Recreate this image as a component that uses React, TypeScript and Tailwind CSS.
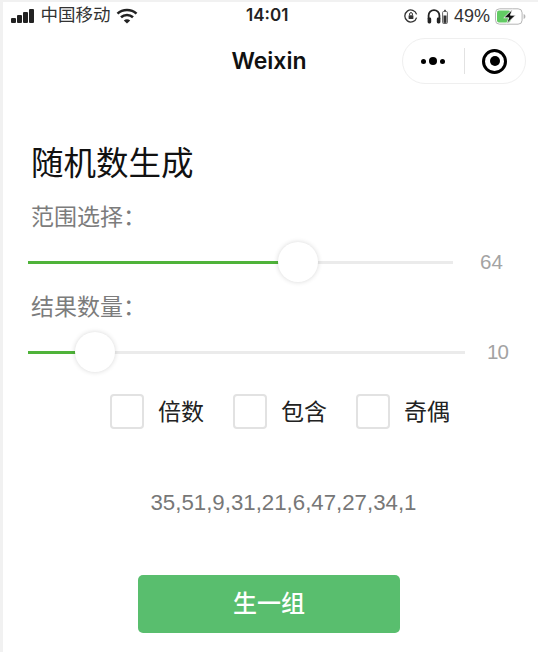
import { Fragment } from "react";

const SANS = "font-['Liberation_Sans','Noto_Sans_CJK_SC',sans-serif]";
const UI = "font-['Inter','Noto_Sans_CJK_SC',sans-serif]";

function SignalBars() {
  return (
    <div className="flex items-end gap-[1.5px]">
      <span className="h-[5px] w-[4.5px] rounded-[1px] bg-[#222]" />
      <span className="h-[8px] w-[4.5px] rounded-[1px] bg-[#222]" />
      <span className="h-[11px] w-[4.5px] rounded-[1px] bg-[#222]" />
      <span className="h-[14px] w-[4.5px] rounded-[1px] bg-[#222]" />
    </div>
  );
}

function WifiIcon() {
  return (
    <svg width="22" height="16" viewBox="0 0 22 16" fill="none" stroke="#222" strokeWidth="2.6">
      <path d="M1.5 5.6C6.8 0.8 15.2 0.8 20.5 5.6" />
      <path d="M5 9.2C8.4 6.2 13.6 6.2 17 9.2" />
      <path d="M11 15.5L7.8 12.4C9.6 10.9 12.4 10.9 14.2 12.4Z" fill="#222" stroke="none" />
    </svg>
  );
}

function OrientationLock() {
  return (
    <svg width="14" height="14" viewBox="0 0 14 14" fill="none">
      <path d="M12.6 8.6A6 6 0 1 1 12.6 5.4" stroke="#333" strokeWidth="1.3" />
      <rect x="4.6" y="6.2" width="4.8" height="3.8" rx="0.6" fill="#333" />
      <path d="M5.6 6.2V5A1.4 1.4 0 0 1 8.4 5V6.2" stroke="#333" strokeWidth="1" />
    </svg>
  );
}

function Headphones() {
  return (
    <svg width="22" height="16" viewBox="0 0 22 16" fill="none">
      <path d="M1.6 11V7.5A5.4 5.4 0 0 1 12.4 7.5V11" stroke="#222" strokeWidth="1.8" />
      <rect x="0.6" y="9.5" width="3.6" height="6" rx="1.4" fill="#222" />
      <rect x="9.8" y="9.5" width="3.6" height="6" rx="1.4" fill="#222" />
      <rect x="15.6" y="3.5" width="4.8" height="12" rx="1" fill="none" stroke="#555" strokeWidth="0.9" />
      <rect x="16.5" y="7.5" width="3" height="7.4" fill="#333" />
      <rect x="17" y="1.8" width="2" height="1.4" fill="#555" />
    </svg>
  );
}

function Battery() {
  return (
    <svg width="31" height="17" viewBox="0 0 31 17" fill="none">
      <rect x="0.5" y="0.8" width="26.6" height="15.4" rx="4" stroke="#b5b5b5" strokeWidth="1" />
      <rect x="2" y="2.4" width="13.5" height="12.2" rx="2" fill="#62cb63" />
      <path d="M28.6 6V11C30 10.6 30.4 9.5 30.4 8.5C30.4 7.5 30 6.4 28.6 6Z" fill="#b5b5b5" />
      <path d="M17.5 1.2L8.8 9.8H13.8L11.6 15.8L20.6 7.2H15.4Z" fill="#111" stroke="#fff" strokeWidth="0.8" />
    </svg>
  );
}

function Capsule() {
  return (
    <div className="flex h-[46px] w-[124px] items-center rounded-full border border-[#efefef] bg-white">
      <div className="flex flex-1 items-center justify-center gap-[3px]">
        <span className="h-[5px] w-[5px] rounded-full bg-black" />
        <span className="h-[8px] w-[8px] rounded-full bg-black" />
        <span className="h-[5px] w-[5px] rounded-full bg-black" />
      </div>
      <span className="h-[26px] w-px bg-[#e2e2e2]" />
      <div className="flex flex-1 items-center justify-center">
        <span className="flex h-[25px] w-[25px] items-center justify-center rounded-full border-[3px] border-black">
          <span className="h-[10px] w-[10px] rounded-full bg-black" />
        </span>
      </div>
    </div>
  );
}

function Slider({
  trackWidth,
  filled,
  value,
  valueClass,
}: {
  trackWidth: number;
  filled: number;
  value: number;
  valueClass: string;
}) {
  return (
    <div className="mt-[5px] flex h-[50px] items-center pl-[25px]">
      <div className="relative h-[3px] bg-[#ebebeb]" style={{ width: trackWidth }}>
        <div className="h-full bg-[#4fb33a]" style={{ width: filled }} />
        <div
          className="absolute top-[-19px] h-[40px] w-[40px] rounded-full bg-white shadow-[0_0_5px_rgba(0,0,0,0.16)]"
          style={{ left: filled - 1 }}
        />
      </div>
      <span className={`text-[20.5px] leading-none text-[#a3a3a3] ${valueClass}`}>{value}</span>
    </div>
  );
}

export default function App() {
  return (
    <div className={`h-[652px] w-[538px] overflow-hidden bg-[#f1f1f1] pl-[3px] pt-[2px] ${SANS}`}>
      <div className="h-[650px] w-[535px] bg-white">
        <div className="relative flex h-[28px] items-center justify-between pl-[8px] pr-[12px]">
          <div className="flex items-center">
            <SignalBars />
            <span className="ml-[7px] text-[17.5px] leading-none text-[#333]">中国移动</span>
            <span className="ml-[5px] flex">
              <WifiIcon />
            </span>
          </div>
          <span className={`absolute left-[243px] top-[5px] text-[17px] font-semibold leading-none text-[#222] ${UI}`}>
            14:01
          </span>
          <div className="flex items-center gap-[5px]">
            <span className="mr-[4px] flex">
              <OrientationLock />
            </span>
            <Headphones />
            <span className="text-[18px] leading-none text-[#333]">49%</span>
            <Battery />
          </div>
        </div>

        <div className="relative flex h-[62px] items-center justify-center">
          <span className={`ml-[-3px] text-[23px] font-semibold leading-none text-[#111] ${UI}`}>Weixin</span>
          <div className="absolute right-[12px] top-[8px]">
            <Capsule />
          </div>
        </div>

        <h1 className="ml-[28px] mt-[52px] text-[32.5px] font-normal leading-[40px] text-[#111]">随机数生成</h1>

        <div className="ml-[28px] mt-[18px] text-[23px] leading-[30px] text-[#7c7c7c]">范围选择：</div>
        <Slider trackWidth={425} filled={251} value={64} valueClass="ml-[27px]" />

        <div className="ml-[28px] mt-[5px] text-[23px] leading-[30px] text-[#7c7c7c]">结果数量：</div>
        <Slider trackWidth={437} filled={48} value={10} valueClass="ml-[22px] tracking-[-1px]" />

        <div className="ml-[107px] mt-[17px] flex items-center">
          {["倍数", "包含", "奇偶"].map((label, i) => (
            <Fragment key={label}>
              <span
                className={`h-[35px] w-[34px] rounded-[4px] border-2 border-[#e2e2e2] ${i > 0 ? "ml-[29px]" : ""}`}
              />
              <span className="ml-[14px] text-[23px] leading-[30px] text-[#222]">{label}</span>
            </Fragment>
          ))}
        </div>

        <div className="mt-[59px] pl-[26px] text-center text-[22.25px] leading-[30px] text-[#777]">
          35,51,9,31,21,6,47,27,34,1
        </div>

        <button className="ml-[135px] mt-[57px] block h-[58px] w-[262px] rounded-[5px] bg-[#59be6e] text-[24px] font-medium text-white">
          生一组
        </button>
      </div>
    </div>
  );
}
